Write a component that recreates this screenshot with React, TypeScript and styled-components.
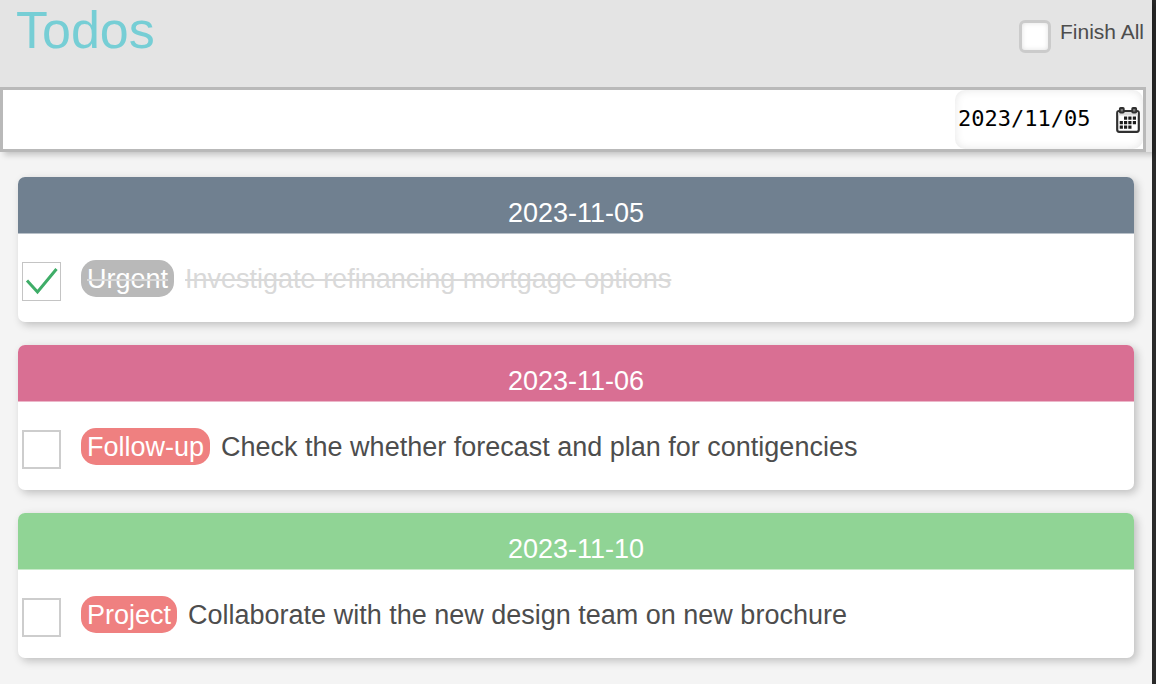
import React, { useState } from "react";
import styled, { createGlobalStyle } from "styled-components";

const GlobalStyle = createGlobalStyle`
  *, *::before, *::after { box-sizing: border-box; }
  body {
    margin: 0;
    background: #f4f4f4;
    color: #4d4d4d;
    font-family: "Liberation Sans", Arial, Helvetica, sans-serif;
  }
`;

const Page = styled.div`
  min-height: 100vh;
  border-right: 4px solid #2a2a2a;
  background: #f4f4f4;
`;

const Header = styled.header`
  padding-right: 6px;
  background: #e4e4e4;
  box-shadow: 4px 3px 6px rgba(0, 0, 0, 0.2);
`;

const TitleBar = styled.div`
  display: flex;
  justify-content: space-between;
  align-items: flex-start;
  height: 87px;
  padding: 0 2px 0 16px;
`;

const Title = styled.h1`
  margin: 0;
  font-size: 52px;
  line-height: 60px;
  font-weight: 400;
  color: #76ced5;
`;

const FinishAll = styled.label`
  display: flex;
  gap: 9px;
  padding-top: 20px;
  font-size: 21px;
  line-height: 24px;
`;

const FinishAllBox = styled.input`
  appearance: none;
  width: 32px;
  height: 33px;
  margin: 0;
  border: 3px solid #cbcbcb;
  border-radius: 6px;
  background: #fff;
  box-shadow: inset 0 0 5px rgba(0, 0, 0, 0.12);

  &:checked {
    background: #76ced5;
  }
`;

const EntryBar = styled.form`
  display: flex;
  height: 65px;
  border: 3px solid #b9b9b9;
  background: #fff;
`;

const EntryInput = styled.input`
  flex: 1;
  min-width: 0;
  padding: 0 16px;
  border: 0;
  outline: 0;
  background: #fff;
  color: #4d4d4d;
  font: inherit;
  font-size: 27px;
`;

const DateField = styled.div`
  display: flex;
  align-items: center;
  width: 188px;
  padding: 0 3px 0 3px;
  border-radius: 10px;
  box-shadow: inset 0 0 10px rgba(0, 0, 0, 0.1);
`;

const DateInput = styled.input`
  flex: 1;
  min-width: 0;
  padding: 0 0 2px;
  border: 0;
  outline: 0;
  background: transparent;
  color: #000;
  font-family: "DejaVu Sans Mono", Menlo, monospace;
  font-size: 22px;
  line-height: 28px;
`;

const CalendarButton = styled.button`
  display: flex;
  padding: 0;
  border: 0;
  background: transparent;
  cursor: pointer;
`;

const Days = styled.main`
  display: flex;
  flex-direction: column;
  gap: 23px;
  padding: 25px 18px;
`;

const Card = styled.section`
  overflow: hidden;
  border-radius: 7px;
  background: #fff;
  box-shadow: 3px 3px 8px rgba(0, 0, 0, 0.22);
`;

const CardDate = styled.h2<{ $color: string }>`
  height: 57px;
  margin: 0;
  padding-top: 20px;
  border-bottom: 1px solid rgba(255, 255, 255, 0.5);
  background: ${({ $color }) => $color};
  color: #fff;
  font-size: 27px;
  line-height: 32px;
  font-weight: 400;
  text-align: center;
`;

const TaskList = styled.ul`
  margin: 0;
  padding: 0;
  list-style: none;
`;

const Task = styled.li`
  height: 88px;
  padding: 26px 4px 0;
`;

const TaskLabel = styled.label<{ $done: boolean }>`
  display: flex;
  align-items: flex-start;
  color: ${({ $done }) => ($done ? "#d9d9d9" : "#4d4d4d")};
  font-size: 27px;
  line-height: 39px;
`;

const Check = styled.span`
  display: grid;
  width: 39px;
  height: 39px;
  margin: 2px 20px 0 0;

  & > * {
    grid-area: 1 / 1;
  }
`;

const CheckInput = styled.input`
  appearance: none;
  width: 39px;
  height: 39px;
  margin: 0;
  border: 2px solid #cdcdcd;
  background: #fff;

  &:checked {
    border-width: 1px;
    border-color: #c4c4c4;
  }
`;

const CheckMark = styled.svg`
  pointer-events: none;
`;

const Tag = styled.span<{ $done: boolean }>`
  flex: none;
  height: 37px;
  margin-right: 11px;
  padding: 0 6px;
  border-radius: 15px;
  background: ${({ $done }) => ($done ? "#b9b9b9" : "#ef8080")};
  color: #fff;
  text-decoration: ${({ $done }) => ($done ? "line-through #d9d9d9 2px" : "none")};
`;

const TaskText = styled.span<{ $done: boolean }>`
  text-decoration: ${({ $done }) => ($done ? "line-through 2px" : "none")};
`;

const CalendarIcon = () => (
  <svg width="24" height="26" viewBox="0 0 24 26" aria-hidden="true">
    <rect x="1.2" y="4.2" width="21.6" height="20.6" rx="2" fill="#fff" stroke="#303030" strokeWidth="2.2" />
    <path d="M2.3 5h19.4v3.5H2.3z" fill="#dcdcdc" />
    <rect x="3.8" y="1" width="4" height="4.5" rx="0.8" fill="#777" stroke="#303030" strokeWidth="1.8" />
    <rect x="16.2" y="1" width="4" height="4.5" rx="0.8" fill="#777" stroke="#303030" strokeWidth="1.8" />
    <path
      d="M8 9.5h3.2v3.2H8zM12.3 9.5h3.2v3.2h-3.2zM16.8 9.5h3.2v3.2h-3.2zM3.7 14h3.2v3.2H3.7zM8 14h3.2v3.2H8zM12.3 14h3.2v3.2h-3.2zM16.8 14h3.2v3.2h-3.2zM3.7 18.6h3.2v3.2H3.7zM8 18.6h3.2v3.2H8zM12.3 18.6h3.2v3.2h-3.2z"
      fill="#1c1c1c"
    />
  </svg>
);

type Todo = { date: string; color: string; tag: string; text: string; done: boolean };

const initialTodos: Todo[] = [
  { date: "2023-11-05", color: "#708090", tag: "Urgent", text: "Investigate refinancing mortgage options", done: true },
  { date: "2023-11-06", color: "#d96f93", tag: "Follow-up", text: "Check the whether forecast and plan for contigencies", done: false },
  { date: "2023-11-10", color: "#90d495", tag: "Project", text: "Collaborate with the new design team on new brochure", done: false },
];

export default function App() {
  const [todos, setTodos] = useState(initialTodos);
  const toggle = (index: number) =>
    setTodos(todos.map((todo, i) => (i === index ? { ...todo, done: !todo.done } : todo)));
  const allDone = todos.every((todo) => todo.done);

  return (
    <Page>
      <GlobalStyle />
      <Header>
        <TitleBar>
          <Title>Todos</Title>
          <FinishAll>
            <FinishAllBox
              type="checkbox"
              checked={allDone}
              onChange={() => setTodos(todos.map((todo) => ({ ...todo, done: !allDone })))}
            />
            Finish All
          </FinishAll>
        </TitleBar>
        <EntryBar onSubmit={(event) => event.preventDefault()}>
          <EntryInput type="text" aria-label="New todo" />
          <DateField>
            <DateInput type="text" aria-label="Date" defaultValue="2023/11/05" />
            <CalendarButton type="button" aria-label="Choose date">
              <CalendarIcon />
            </CalendarButton>
          </DateField>
        </EntryBar>
      </Header>
      <Days>
        {todos.map((todo, index) => (
          <Card key={todo.date}>
            <CardDate $color={todo.color}>{todo.date}</CardDate>
            <TaskList>
              <Task>
                <TaskLabel $done={todo.done}>
                  <Check>
                    <CheckInput type="checkbox" checked={todo.done} onChange={() => toggle(index)} />
                    {todo.done && (
                      <CheckMark width="39" height="39" viewBox="0 0 39 39" aria-hidden="true">
                        <path d="M5 18.5L15.5 30L34.5 7" fill="none" stroke="#3fad68" strokeWidth="3" />
                      </CheckMark>
                    )}
                  </Check>
                  <Tag $done={todo.done}>{todo.tag}</Tag>
                  <TaskText $done={todo.done}>{todo.text}</TaskText>
                </TaskLabel>
              </Task>
            </TaskList>
          </Card>
        ))}
      </Days>
    </Page>
  );
}
